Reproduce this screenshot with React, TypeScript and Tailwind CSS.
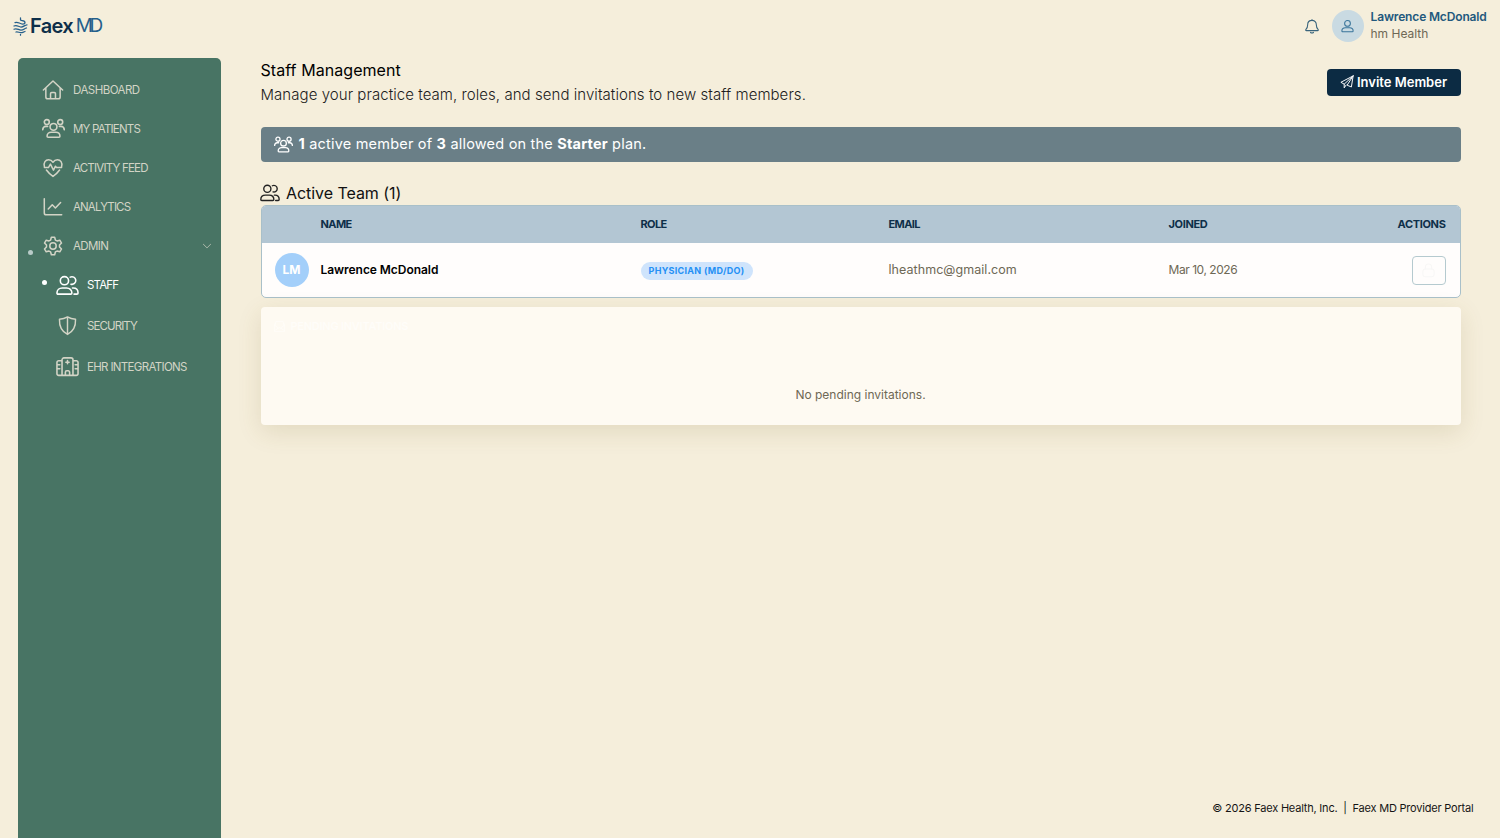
import type { ReactNode } from "react";
import { BsChevronDown, BsEnvelopePaper } from "react-icons/bs";

function Svg({ children, className }: { children: ReactNode; className: string }) {
  return (
    <svg viewBox="0 0 24 24" fill="none" stroke="currentColor" strokeWidth="1.65" strokeLinecap="round" strokeLinejoin="round" className={className}>
      {children}
    </svg>
  );
}

function HouseIcon() {
  return (
    <Svg className="h-[22px] w-[22px]">
      <path d="M1.5 12 12 2.2 22.500 12M4.200 9.800v9.700a2 2 0 0 0 2 2h11.600a2 2 0 0 0 2-2V9.800M9.300 21.300v-5.300a1.200 1.200 0 0 1 1.200-1.200h3a1.200 1.200 0 0 1 1.200 1.200v5.300" />
    </Svg>
  );
}

function GroupIcon({ className }: { className: string }) {
  return (
    <Svg className={className}>
      <circle cx="12" cy="10.300" r="3.600" />
      <circle cx="5" cy="5.300" r="2.600" />
      <circle cx="19" cy="5.300" r="2.600" />
      <path d="M5.300 20.200c0-2.800 2-4.200 4.200-4.200h5c2.200 0 4.200 1.400 4.200 4.200 0 .7-.4 1-1 1H6.300c-.6 0-1-.3-1-1ZM.8 13.200c0-2.300 1.300-3.400 3.300-3.400h1.800M23.200 13.200c0-2.300-1.300-3.400-3.300-3.400h-1.800" />
    </Svg>
  );
}

function PeopleIcon({ className }: { className: string }) {
  return (
    <Svg className={className}>
      <circle cx="8.800" cy="7" r="4.300" />
      <path d="M1 19.800C1 16.500 3.500 14.600 6.500 14.600h4.600c3 0 5.500 1.900 5.500 5.200 0 .8-.4 1.200-1.200 1.200H2.200c-.8 0-1.200-.4-1.200-1.200ZM14.800 3.300a4 4 0 1 1 .8 7.400M17.200 14.600h.8c2.900 0 5 1.900 5 5.200 0 .8-.4 1.200-1.200 1.200h-3" />
    </Svg>
  );
}

function HeartIcon() {
  return (
    <Svg className="h-[22px] w-[22px]">
      <path d="M2.600 10.500C1.300 5.800 4 3 7.200 3c2 0 3.700 1.100 4.800 2.700C13.100 4.100 14.800 3 16.800 3c3.200 0 5.900 2.800 4.600 7.500M4.800 14.200c1.900 2.700 4.600 5.100 7.200 7 2.600-1.900 5.300-4.300 7.200-7M2.600 11.500H7l2.200-3.700 3.300 6.500 2.200-4.300 1 1.500h5.700" />
    </Svg>
  );
}

function ChartIcon() {
  return (
    <Svg className="h-[22px] w-[22px]">
      <path d="M2.500 3v15.500a2 2 0 0 0 2 2h17M6.800 14.200l4.400-4.600 3.400 3.500 5.700-6" />
    </Svg>
  );
}

function GearIcon() {
  return (
    <Svg className="h-[22px] w-[22px]">
      <circle cx="12" cy="12" r="3.500" />
      <path d="M10.200 2.500h3.600l.8 3 1.800 1 3-.8 1.900 3.100-2.200 2.200v2l2.200 2.200-1.900 3.100-3-.8-1.800 1-.8 3h-3.600l-.8-3-1.800-1-3 .8-1.900-3.100L4.900 13v-2L2.700 8.800l1.900-3.100 3 .8 1.800-1Z" />
    </Svg>
  );
}

function ShieldIcon() {
  return (
    <Svg className="h-[21px] w-[21px]">
      <path d="M12 2.200c3 1.800 6 2.500 9.200 2.700C21.500 13 18.500 19 12 22.200 5.500 19 2.500 13 2.800 4.900 6 4.700 9 4 12 2.200ZM12 2.500v19.500" />
    </Svg>
  );
}

function HospitalIcon() {
  return (
    <Svg className="h-[23px] w-[23px]">
      <path d="M6.300 21.300V5a2 2 0 0 1 2-2h7.400a2 2 0 0 1 2 2v16.300M6.300 6H2.800A1.800 1.800 0 0 0 1 7.800v11.700a1.800 1.800 0 0 0 1.800 1.800h18.400a1.800 1.800 0 0 0 1.800-1.800V7.800A1.800 1.800 0 0 0 21.200 6h-3.500M12 5.800v3.400M10.300 7.500h3.400M9.800 21v-3a1.500 1.500 0 0 1 1.500-1.500h1.400a1.500 1.500 0 0 1 1.500 1.500v3M1.200 10.200h2.800M1.200 14.300h2.800M20 10.200h2.800M20 14.300h2.800" />
    </Svg>
  );
}

function BellIcon() {
  return (
    <Svg className="h-4 w-4">
      <path d="M12 2.200v1.300M12 3.500c-4 0-6.500 2.900-6.500 6.500 0 4.500-1.300 5.700-2.700 7.200-.6.800-.2 1.800.8 1.800h16.800c1 0 1.400-1 .8-1.800-1.400-1.500-2.700-2.700-2.700-7.200 0-3.600-2.500-6.500-6.500-6.500ZM9.800 21.500c1 1.300 3.400 1.300 4.400 0" />
    </Svg>
  );
}

function PersonIcon() {
  return (
    <Svg className="h-[15px] w-[15px]">
      <circle cx="12" cy="7" r="4.600" />
      <path d="M3 19.200c0-3.400 2.500-5.200 5.500-5.200h7c3 0 5.500 1.800 5.500 5.200 0 .7-.5 1.100-1.200 1.100H4.200c-.7 0-1.200-.4-1.200-1.100Z" />
    </Svg>
  );
}

function PlaneIcon() {
  return (
    <Svg className="mr-[3px] h-[14px] w-[14px]">
      <path d="M22.500 1.500 1.500 12.500l5.700 3.200L22.500 1.500 19.500 20.500l-7.300-3 10.300-16ZM7.200 15.700v6.300l3.300-4.800" />
    </Svg>
  );
}

function LockIcon() {
  return (
    <Svg className="h-[15px] w-[15px]">
      <rect x="3" y="9.500" width="18" height="12.500" rx="4" />
      <path d="M7 9.500V6.500a5 5 0 0 1 10 0v3" />
    </Svg>
  );
}

function LogoMark() {
  return (
    <svg viewBox="0 0 15 19" fill="none" stroke="#255f8b" strokeWidth="1.250" strokeLinecap="round" className="h-[19px] w-[15px] shrink-0">
      <path d="M7.500 .8v2.200c0 1 4.500.2 4.500 2.400 0 1.100-1 1.600-2.400 1.600C6.500 7 5 4.300 2 5.600M1 9c3-1.600 4.500 1 7 1 2.700 0 3.500-1.800 6-2.200M1 12.200c3-1.600 4.500 1 7 1 2.700 0 3.500-1.800 5.500-2.200M3 15c2-.5 3 .7 5 .7 1.500 0 2.500-.8 4-1.200M7.500 17.300v.9" />
    </svg>
  );
}

const navItems = [
  { label: "DASHBOARD", icon: <HouseIcon />, text: "tracking-[-0.53px]" },
  { label: "MY PATIENTS", icon: <GroupIcon className="h-[23px] w-[23px]" />, text: "tracking-[-0.8px]" },
  { label: "ACTIVITY FEED", icon: <HeartIcon />, text: "tracking-[-0.8px]" },
  { label: "ANALYTICS", icon: <ChartIcon />, text: "tracking-[-0.87px]" },
];

const subItems = [
  { label: "SECURITY", icon: <ShieldIcon />, text: "tracking-[-0.9px]" },
  { label: "EHR INTEGRATIONS", icon: <HospitalIcon />, text: "tracking-[-0.67px]" },
];

const cols = "grid grid-cols-[59px_320px_248px_280px_1fr] items-center pr-[14px]";

function Sidebar() {
  return (
    <aside className="ml-[17.500px] h-[781px] w-[203px] shrink-0 rounded-t-[5px] bg-[#487464] pt-[13px] text-[11.500px] text-[#d3d4c6]">
      {navItems.map((item) => (
        <div key={item.label} className="flex h-[38.900px] items-center">
          <span className="ml-[24px] flex w-[23px] justify-center">{item.icon}</span>
          <span className={`ml-[8.500px] pt-[2px] ${item.text}`}>{item.label}</span>
        </div>
      ))}
      <div className="flex h-[38.900px] items-center">
        <span className="mt-[14px] ml-[10px] h-[5.500px] w-[5.500px] rounded-full bg-[#b9cbc8]" />
        <span className="ml-[8.500px] flex w-[23px] justify-center"><GearIcon /></span>
        <span className="ml-[8.500px] pt-[2px] tracking-[-0.6px]">ADMIN</span>
        <BsChevronDown className="mr-[9px] ml-auto h-[10px] w-[10px]" />
      </div>
      <div className="flex h-[40.500px] items-center text-white">
        <span className="mb-[5px] ml-[24px] h-[5.500px] w-[5.500px] rounded-full bg-white" />
        <span className="ml-[8.500px] flex w-[23px] justify-center"><PeopleIcon className="h-[23px] w-[23px]" /></span>
        <span className="ml-[8.500px] tracking-[-0.8px]">STAFF</span>
      </div>
      {subItems.map((item) => (
        <div key={item.label} className="flex h-[40.800px] items-center">
          <span className="ml-[38px] flex w-[23px] justify-center">{item.icon}</span>
          <span className={`ml-[8.500px] pt-[2px] ${item.text}`}>{item.label}</span>
        </div>
      ))}
    </aside>
  );
}

function TeamTable() {
  return (
    <div className="h-[93px] overflow-hidden rounded-[5px] border border-[#a9c0c9] bg-[#fffdfc] text-[12px]">
      <div className={`${cols} h-[36.500px] bg-[#b3c6d3] text-[11px] font-bold text-[#0e2f49]`}>
        <span />
        <span className="tracking-[-0.6px]">NAME</span>
        <span className="tracking-[-0.6px]">ROLE</span>
        <span className="tracking-[-0.6px]">EMAIL</span>
        <span className="flex justify-between">
          <span className="tracking-[-0.35px]">JOINED</span>
          <span className="tracking-[-0.35px]">ACTIONS</span>
        </span>
      </div>
      <div className={`${cols} h-[55px]`}>
        <span className="ml-[13px] flex h-[34px] w-[34px] items-center justify-center rounded-full bg-[#a3cffa] text-[12px] font-bold text-white">LM</span>
        <span className="font-semibold tracking-[-0.05px] text-black">Lawrence McDonald</span>
        <span className="mt-[2px] flex h-[18px] w-[112px] items-center justify-center rounded-full bg-[#cfe4fc] text-[9px] font-bold tracking-[0.3px] text-[#2490f5]">PHYSICIAN (MD/DO)</span>
        <span className="text-[12.500px] tracking-[0.050px] text-[#6e6855]">lheathmc@gmail.com</span>
        <span className="flex items-center justify-between text-[#6e6855]">
          <span className="tracking-[-0.45px]">Mar 10, 2026</span>
          <button className="flex h-[29px] w-[34px] items-center justify-center rounded-[4px] border border-[#b5cacf] text-[#f8f7f6]">
            <LockIcon />
          </button>
        </span>
      </div>
    </div>
  );
}

export default function App() {
  return (
    <div className="flex h-[838px] w-[1500px] flex-col overflow-hidden bg-[#f5eedb] font-['Inter','Liberation_Sans',sans-serif]">
      <header className="flex h-[57.500px] shrink-0 items-start">
        <div className="flex h-[52px] items-center pl-[13px]">
          <LogoMark />
          <span className="ml-[2px] text-[20px] font-semibold tracking-[-0.7px] text-[#0e2f49]">Faex</span>
          <span className="ml-[3px] text-[19px] tracking-[-3.500px] text-[#255f8b]">MD</span>
        </div>
        <div className="ml-auto flex h-[52px] items-center">
          <span className="text-[#39647c]"><BellIcon /></span>
          <div className="ml-[12px] flex h-8 w-8 items-center justify-center rounded-full bg-[#c9dae2] text-[#39749a]">
            <PersonIcon />
          </div>
          <div className="mb-[2px] ml-[7px] flex w-[129.500px] flex-col text-[12px] leading-[17px] whitespace-nowrap">
            <span className="font-semibold tracking-[-0.15px] text-[#22587d]">Lawrence McDonald</span>
            <span className="text-[#6e6855]">hm Health</span>
          </div>
        </div>
      </header>
      <div className="flex flex-1">
        <Sidebar />
        <main className="ml-10 flex w-[1200px] flex-col">
          <div className="flex h-[69px] items-start justify-between">
            <div>
              <h1 className="h-6 text-[16px] leading-[25px] tracking-[0.06px] text-black">Staff Management</h1>
              <p className="h-6 text-[15px] leading-[25px] font-light tracking-[0.06px] text-[#1c1c1c]">Manage your practice team, roles, and send invitations to new staff members.</p>
            </div>
            <button className="mt-[11px] flex h-[27.500px] w-[134px] items-center justify-center rounded-[4px] bg-[#0c2b43] text-[13px] font-semibold text-white">
              <PlaneIcon />
              <span>Invite Member</span>
            </button>
          </div>
          <div className="flex h-[35px] items-center rounded-[4px] bg-[#6a7f87] pl-[13px] text-[14.500px] text-white">
            <GroupIcon className="h-[19px] w-[19px]" />
            <span className="ml-[6px] tracking-[0.2px]"><b>1</b> active member of <b>3</b> allowed on the <b>Starter</b> plan.</span>
          </div>
          <div className="mt-[20px] flex h-[23.500px] items-center">
            <PeopleIcon className="-ml-px h-[20px] w-[20px] text-[#222]" />
            <h2 className="ml-[6.500px] text-[16px] tracking-[-0.05px] text-[#111]">Active Team (1)</h2>
          </div>
          <TeamTable />
          <section className="mt-[8.500px] flex h-[118px] flex-col rounded-[4px] bg-[#fefaf2] shadow-[0_7px_24px_rgba(110,90,30,0.14)]">
            <div className="flex h-[40px] items-center pl-[13px] text-[11px] font-semibold tracking-[-0.25px] text-[#fffdf9]">
              <BsEnvelopePaper className="mr-[6px] h-[11px] w-[11px]" />
              <span>PENDING INVITATIONS</span>
            </div>
            <p className="mt-[37px] text-center text-[12px] leading-[22px] text-[#6e6855]">No pending invitations.</p>
          </section>
          <footer className="mt-auto mr-[-13px] mb-[22px] self-end text-[11px] leading-[18px] tracking-[-0.2px] whitespace-pre text-[#151515]">© 2026 Faex Health, Inc.  |  Faex MD Provider Portal</footer>
        </main>
      </div>
    </div>
  );
}
